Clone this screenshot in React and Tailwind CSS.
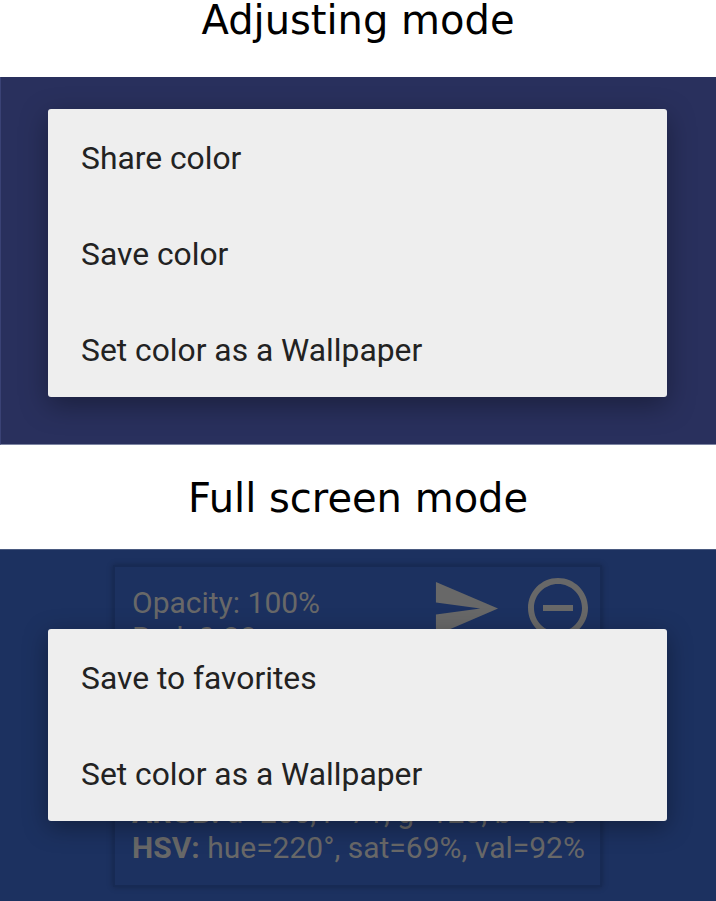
import React from "react";

const roboto = { fontFamily: "Roboto, 'Liberation Sans', sans-serif" };

function MenuItem({ children }) {
  return (
    <div className="h-[96px] flex items-center pl-[33px] pt-[2px] text-[31.8px] leading-[37px] text-[#222222]" style={roboto}>
      {children}
    </div>
  );
}

function SendIcon() {
  return (
    <svg viewBox="0 0 24 24" className="w-[71px] h-[71px]" fill="#686868">
      <path d="M2.01 21L23 12 2.01 3 2 10l15 2-15 2z" />
    </svg>
  );
}

function RemoveCircleIcon() {
  return (
    <svg viewBox="0 0 24 24" className="w-[72px] h-[72px]" fill="#686868">
      <path d="M7 11v2h10v-2H7zm5-9C6.48 2 2 6.48 2 12s4.48 10 10 10 10-4.48 10-10S17.52 2 12 2zm0 18c-4.41 0-8-3.59-8-8s3.59-8 8-8 8 3.59 8 8-3.59 8-8 8z" />
    </svg>
  );
}

export default function App() {
  return (
    <div className="w-[716px] h-[901px] bg-white overflow-hidden">
      <div
        className="h-[77px] text-center text-[40px] leading-none text-black"
        style={{ fontFamily: "'DejaVu Sans', sans-serif" }}
      >
        Adjusting mode
      </div>
      <div className="h-[368px] bg-[#29305d] border-b border-[#7c84a2] border-l border-l-[#3a4275] pt-[32px] pl-[47px]">
        <div className="w-[619px] bg-[#eeeeee] rounded-[3px] shadow-[0_8px_28px_rgba(0,0,0,0.35)]">
          <MenuItem>Share color</MenuItem>
          <MenuItem>Save color</MenuItem>
          <MenuItem>Set color as a Wallpaper</MenuItem>
        </div>
      </div>
      <div
        className="h-[104px] pt-[33px] text-center text-[40px] leading-none text-black"
        style={{ fontFamily: "'DejaVu Sans', sans-serif" }}
      >
        Full screen mode
      </div>
      <div className="relative h-[352px] bg-[#1c3160] border-t border-[#4a5a80] pt-[15px] pl-[113px]">
        <div className="relative w-[489px] h-[322px] border-2 border-[#172a54] shadow-[0_0_6px_rgba(0,0,0,0.25)] pt-[18px] pl-[17px] text-[30px] leading-[35px] text-[#686868]" style={roboto}>
          <div>Opacity: 100%</div>
          <div>Red: 0.28</div>
          <div>Green: 0.47</div>
          <div>Blue: 0.92</div>
          <div>HEX: #4778EB</div>
          <div>Alpha: 1.00</div>
          <div><span className="font-bold">ARGB:</span> a=255, r=71, g=120, b=235</div>
          <div><span className="font-bold">HSV:</span> hue=220°, sat=69%, val=92%</div>
          <div className="absolute top-[5px] right-[6px] flex items-start gap-[21px]">
            <div className="pt-[1px]"><SendIcon /></div>
            <RemoveCircleIcon />
          </div>
        </div>
        <div className="absolute left-[48px] top-[79px] w-[619px] bg-[#eeeeee] rounded-[3px] shadow-[0_6px_24px_rgba(0,0,0,0.35)]">
          <MenuItem>Save to favorites</MenuItem>
          <MenuItem>Set color as a Wallpaper</MenuItem>
        </div>
      </div>
    </div>
  );
}
